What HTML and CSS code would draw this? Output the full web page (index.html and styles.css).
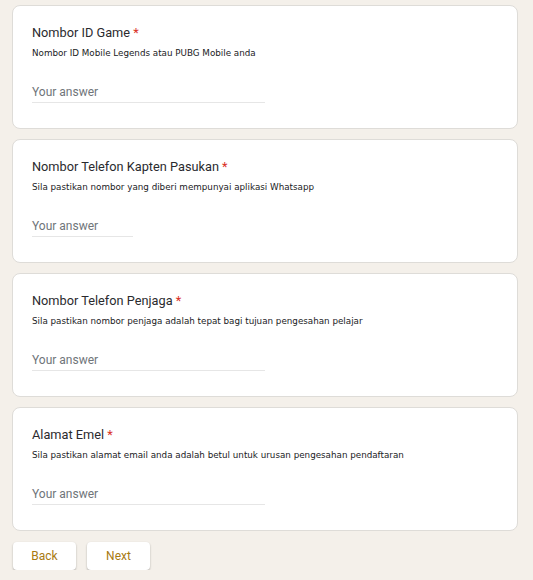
FILE: index.html
```html
<!DOCTYPE html>
<html>
<head>
<meta charset="utf-8">
<link rel="stylesheet" href="styles.css">
</head>
<body>
<div class="form">
  <div class="card">
    <div class="title">Nombor ID Game <span class="req">*</span></div>
    <div class="desc">Nombor ID Mobile Legends atau PUBG Mobile anda</div>
    <div class="field wide">Your answer</div>
  </div>
  <div class="card">
    <div class="title">Nombor Telefon Kapten Pasukan <span class="req">*</span></div>
    <div class="desc">Sila pastikan nombor yang diberi mempunyai aplikasi Whatsapp</div>
    <div class="field short">Your answer</div>
  </div>
  <div class="card">
    <div class="title">Nombor Telefon Penjaga <span class="req">*</span></div>
    <div class="desc">Sila pastikan nombor penjaga adalah tepat bagi tujuan pengesahan pelajar</div>
    <div class="field wide">Your answer</div>
  </div>
  <div class="card">
    <div class="title">Alamat Emel <span class="req">*</span></div>
    <div class="desc">Sila pastikan alamat email anda adalah betul untuk urusan pengesahan pendaftaran</div>
    <div class="field wide">Your answer</div>
  </div>
  <div class="buttons">
    <button class="btn">Back</button>
    <button class="btn">Next</button>
  </div>
</div>
</body>
</html>
```

FILE: styles.css
```css
html, body {
  margin: 0;
  padding: 0;
  background: #f4f0ea;
}
.form {
  width: 506px;
  padding: 5px 0 0 12px;
  display: flex;
  flex-direction: column;
  gap: 10px;
}
.card {
  background: #fff;
  border: 1px solid #dedcd8;
  border-radius: 8px;
  padding: 18px 19px 25px;
  height: 79px;
}
.title {
  font-family: Roboto, "Liberation Sans", sans-serif;
  font-size: 12.75px;
  line-height: 18px;
  color: #2a2a2e;
}
.req {
  color: #d93025;
}
.desc {
  margin-top: 5px;
  font-family: "DejaVu Sans", Verdana, sans-serif;
  font-size: 8.75px;
  line-height: 12px;
  color: #202124;
}
.field {
  margin-top: 23px;
  height: 20px;
  line-height: 20px;
  border-bottom: 1px solid #e6e6e6;
  font-family: Roboto, "Liberation Sans", sans-serif;
  font-size: 12px;
  color: #70757a;
}
.wide { width: 233px; }
.short { width: 101px; }
.buttons {
  display: flex;
  gap: 11px;
  padding-top: 1px;
  padding-left: 1px;
}
.btn {
  width: 63px;
  height: 28px;
  border: none;
  background: #fff;
  border-radius: 4px;
  box-shadow: 0 1px 2px rgba(0,0,0,0.3);
  font-family: Roboto, "Liberation Sans", sans-serif;
  font-size: 12px;
  font-weight: 400;
  color: #a87a12;
  padding: 0;
}
```
